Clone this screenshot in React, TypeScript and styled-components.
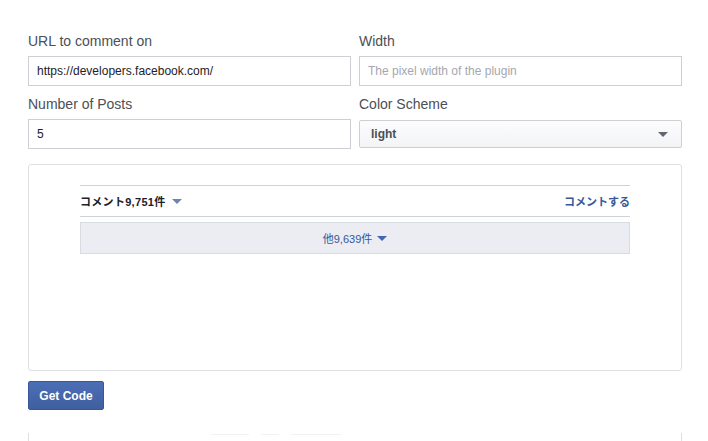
import React from 'react';
import styled, { createGlobalStyle } from 'styled-components';

const GlobalStyle = createGlobalStyle`
  html, body {
    margin: 0;
    padding: 0;
    background: #fff;
    font-family: "Liberation Sans", Arial, Helvetica, sans-serif;
  }
`;

const Page = styled.div`
  padding: 32px 26px 0 28px;
  height: 441px;
  box-sizing: border-box;
  overflow: hidden;
`;

const FieldGrid = styled.div`
  display: grid;
  grid-template-columns: 1fr 1fr;
  column-gap: 8px;
  row-gap: 9px;
`;

const Field = styled.div`
  display: flex;
  flex-direction: column;
`;

const Label = styled.label`
  font-size: 14px;
  line-height: 18px;
  color: #4b4f56;
  margin-bottom: 6px;
`;

const TextInput = styled.input`
  box-sizing: border-box;
  height: 30px;
  width: 100%;
  border: 1px solid #ccd0d5;
  border-radius: 0;
  padding: 0 8px;
  font-family: "Liberation Sans", Arial, sans-serif;
  font-size: 12px;
  color: #1d2129;
  outline: none;
  &::placeholder {
    color: #a4a8ae;
  }
`;

const SelectBox = styled.div`
  box-sizing: border-box;
  height: 28px;
  margin-top: 1px;
  border: 1px solid #ccd0d5;
  border-radius: 2px;
  background: linear-gradient(#fcfcfd, #f3f4f6);
  display: flex;
  align-items: center;
  justify-content: space-between;
  padding: 0 13px 0 11px;
  font-size: 12px;
  font-weight: bold;
  color: #4b4f56;
`;

const Caret = styled.span<{ $color: string; $size?: number }>`
  display: inline-block;
  width: 0;
  height: 0;
  border-left: ${p => p.$size ?? 5}px solid transparent;
  border-right: ${p => p.$size ?? 5}px solid transparent;
  border-top: ${p => (p.$size ?? 5)}px solid ${p => p.$color};
`;

const Preview = styled.div`
  margin-top: 15px;
  height: 207px;
  box-sizing: border-box;
  border: 1px solid #dddfe2;
  border-radius: 3px;
  padding: 20px 51px 0;
`;

const Plugin = styled.div`
  border-top: 1px solid #cfd2d6;
`;

const PluginHeader = styled.div`
  height: 30px;
  display: flex;
  align-items: center;
  justify-content: space-between;
  border-bottom: 1px solid #cfd2d6;
  font-family: "Liberation Sans", "Noto Sans CJK JP", sans-serif;
  font-size: 11px;
  font-weight: bold;
`;

const Count = styled.span`
  color: #1d2129;
  display: flex;
  align-items: center;
  gap: 6px;
  letter-spacing: 0.3px;
`;

const CommentLink = styled.span`
  color: #365899;
`;

const MoreBar = styled.div`
  margin-top: 5px;
  height: 32px;
  box-sizing: border-box;
  background: #ebedf3;
  border: 1px solid #d8dbe2;
  display: flex;
  align-items: center;
  justify-content: center;
  gap: 5px;
  font-family: "Liberation Sans", "Noto Sans CJK JP", sans-serif;
  font-size: 11px;
  color: #365899;
`;

const Button = styled.button`
  margin-top: 10px;
  height: 29px;
  width: 76px;
  box-sizing: border-box;
  border: 1px solid #365899;
  border-radius: 2px;
  background: linear-gradient(#4c6eb5, #3f5f9f);
  color: #fff;
  font-family: "Liberation Sans", Arial, sans-serif;
  font-size: 12px;
  font-weight: bold;
  padding: 0;
  display: block;
`;

const CodePanel = styled.div`
  margin-top: 23px;
  height: 60px;
  border-left: 1px solid #dddfe2;
  border-right: 1px solid #dddfe2;
`;

const Skeleton = styled.div`
  display: flex;
  gap: 12px;
  padding: 1px 0 0 182px;
`;

const SkeletonBar = styled.span<{ $w: number }>`
  display: block;
  height: 1px;
  width: ${p => p.$w}px;
  background: #f0f1f3;
`;

export default function App() {
  return (
    <>
      <GlobalStyle />
      <Page>
        <FieldGrid>
          <Field>
            <Label>URL to comment on</Label>
            <TextInput defaultValue="https://developers.facebook.com/" />
          </Field>
          <Field>
            <Label>Width</Label>
            <TextInput placeholder="The pixel width of the plugin" />
          </Field>
          <Field>
            <Label>Number of Posts</Label>
            <TextInput defaultValue="5" />
          </Field>
          <Field>
            <Label>Color Scheme</Label>
            <SelectBox>
              <span>light</span>
              <Caret $color="#606770" $size={5} />
            </SelectBox>
          </Field>
        </FieldGrid>

        <Preview>
          <Plugin>
            <PluginHeader>
              <Count>
                コメント9,751件
                <Caret $color="#6d84b4" $size={5} />
              </Count>
              <CommentLink>コメントする</CommentLink>
            </PluginHeader>
            <MoreBar>
              他9,639件
              <Caret $color="#4267b2" $size={5} />
            </MoreBar>
          </Plugin>
        </Preview>

        <Button>Get Code</Button>

        <CodePanel>
          <Skeleton>
            <SkeletonBar $w={38} />
            <SkeletonBar $w={18} />
            <SkeletonBar $w={50} />
          </Skeleton>
        </CodePanel>
      </Page>
    </>
  );
}
